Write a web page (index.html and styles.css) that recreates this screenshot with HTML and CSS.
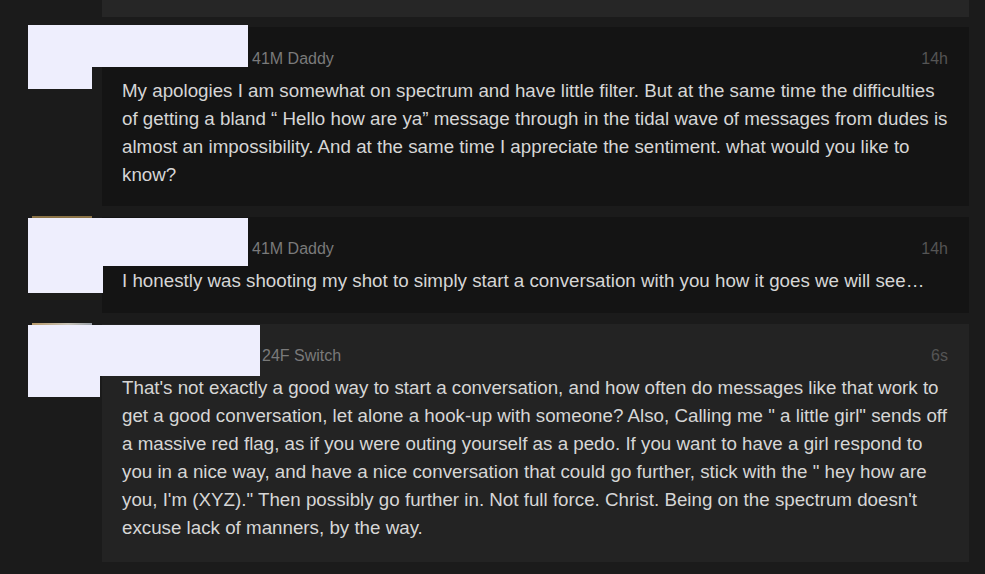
FILE: index.html
```html
<!DOCTYPE html>
<html>
<head>
<meta charset="utf-8">
<link rel="stylesheet" href="styles.css">
</head>
<body>
<div class="thread">
  <div class="prev-card"></div>

  <div class="msg">
    <div class="avatar-col"><div class="avatar a1"></div></div>
    <div class="card dark first">
      <div class="meta"><span class="who">41M Daddy</span><span class="time">14h</span></div>
      <p class="text">My apologies I am somewhat on spectrum and have little filter. But at the same time the difficulties of getting a bland “ Hello how are ya” message through in the tidal wave of messages from dudes is almost an impossibility. And at the same time I appreciate the sentiment. what would you like to know?</p>
    </div>
    <div class="censor c1a"></div><div class="censor c1b"></div>
  </div>

  <div class="msg">
    <div class="avatar-col"><div class="avatar a2"></div></div>
    <div class="card dark">
      <div class="meta"><span class="who">41M Daddy</span><span class="time">14h</span></div>
      <p class="text">I honestly was shooting my shot to simply start a conversation with you how it goes we will see…</p>
    </div>
    <div class="censor c2a"></div><div class="censor c2b"></div>
  </div>

  <div class="msg">
    <div class="avatar-col"><div class="avatar a3"></div></div>
    <div class="card light last">
      <div class="meta"><span class="who wide">24F Switch</span><span class="time">6s</span></div>
      <p class="text">That's not exactly a good way to start a conversation, and how often do messages like that work to get a good conversation, let alone a hook-up with someone? Also, Calling me " a little girl" sends off a massive red flag, as if you were outing yourself as a pedo. If you want to have a girl respond to you in a nice way, and have a nice conversation that could go further, stick with the " hey how are you, I'm (XYZ)." Then possibly go further in. Not full force. Christ. Being on the spectrum doesn't excuse lack of manners, by the way.</p>
    </div>
    <div class="censor c3a"></div><div class="censor c3b"></div>
  </div>
</div>
</body>
</html>
```
FILE: styles.css
```css
html, body {
  margin: 0;
  padding: 0;
  background: #1b1b1b;
  height: 100%;
  overflow: hidden;
}
body {
  font-family: "Liberation Sans", Arial, sans-serif;
}
.thread {
  display: flex;
  flex-direction: column;
  gap: 11px;
}
.prev-card {
  height: 17px;
  margin-left: 102px;
  margin-right: 16px;
  background: #262626;
  margin-bottom: -1px;
}
.msg {
  position: relative;
  display: flex;
  margin-right: 16px;
}
.avatar-col {
  width: 102px;
  flex: none;
  position: relative;
}
.avatar {
  position: absolute;
  left: 32px;
  top: -1px;
  width: 60px;
  height: 60px;
  background: linear-gradient(180deg, #8c7447, #5a4a30);
}
.a3 {
  background: linear-gradient(90deg, #b89a6a, #c9c4b8 60%, #9aa0a8);
}
.card {
  flex: 1;
  padding: 21px 14px 18px 20px;
}
.card.first {
  padding-bottom: 17px;
}
.card.last {
  padding-top: 21px;
  padding-bottom: 20px;
}
.dark { background: #141414; }
.light { background: #232323; }
.meta {
  display: flex;
  justify-content: space-between;
  font-size: 16px;
  line-height: 22px;
}
.who {
  margin-left: 130px;
  color: #7a7a7a;
}
.who.wide {
  margin-left: 140px;
}
.time {
  color: #555;
  margin-right: 7px;
}
.text {
  margin: 7px 0 0;
  font-size: 18.75px;
  line-height: 28px;
  color: #d6d6d6;
}
.censor {
  position: absolute;
  left: 28px;
  background: #eeeefd;
}
.c1a { top: -2px; width: 220px; height: 42px; }
.c1b { top: -2px; width: 64px; height: 64px; }
.c2a { top: 1px; width: 220px; height: 48px; }
.c2b { top: 1px; width: 75px; height: 75px; }
.c3a { top: 1px; width: 232px; height: 51px; }
.c3b { top: 1px; width: 72px; height: 72px; }
```
